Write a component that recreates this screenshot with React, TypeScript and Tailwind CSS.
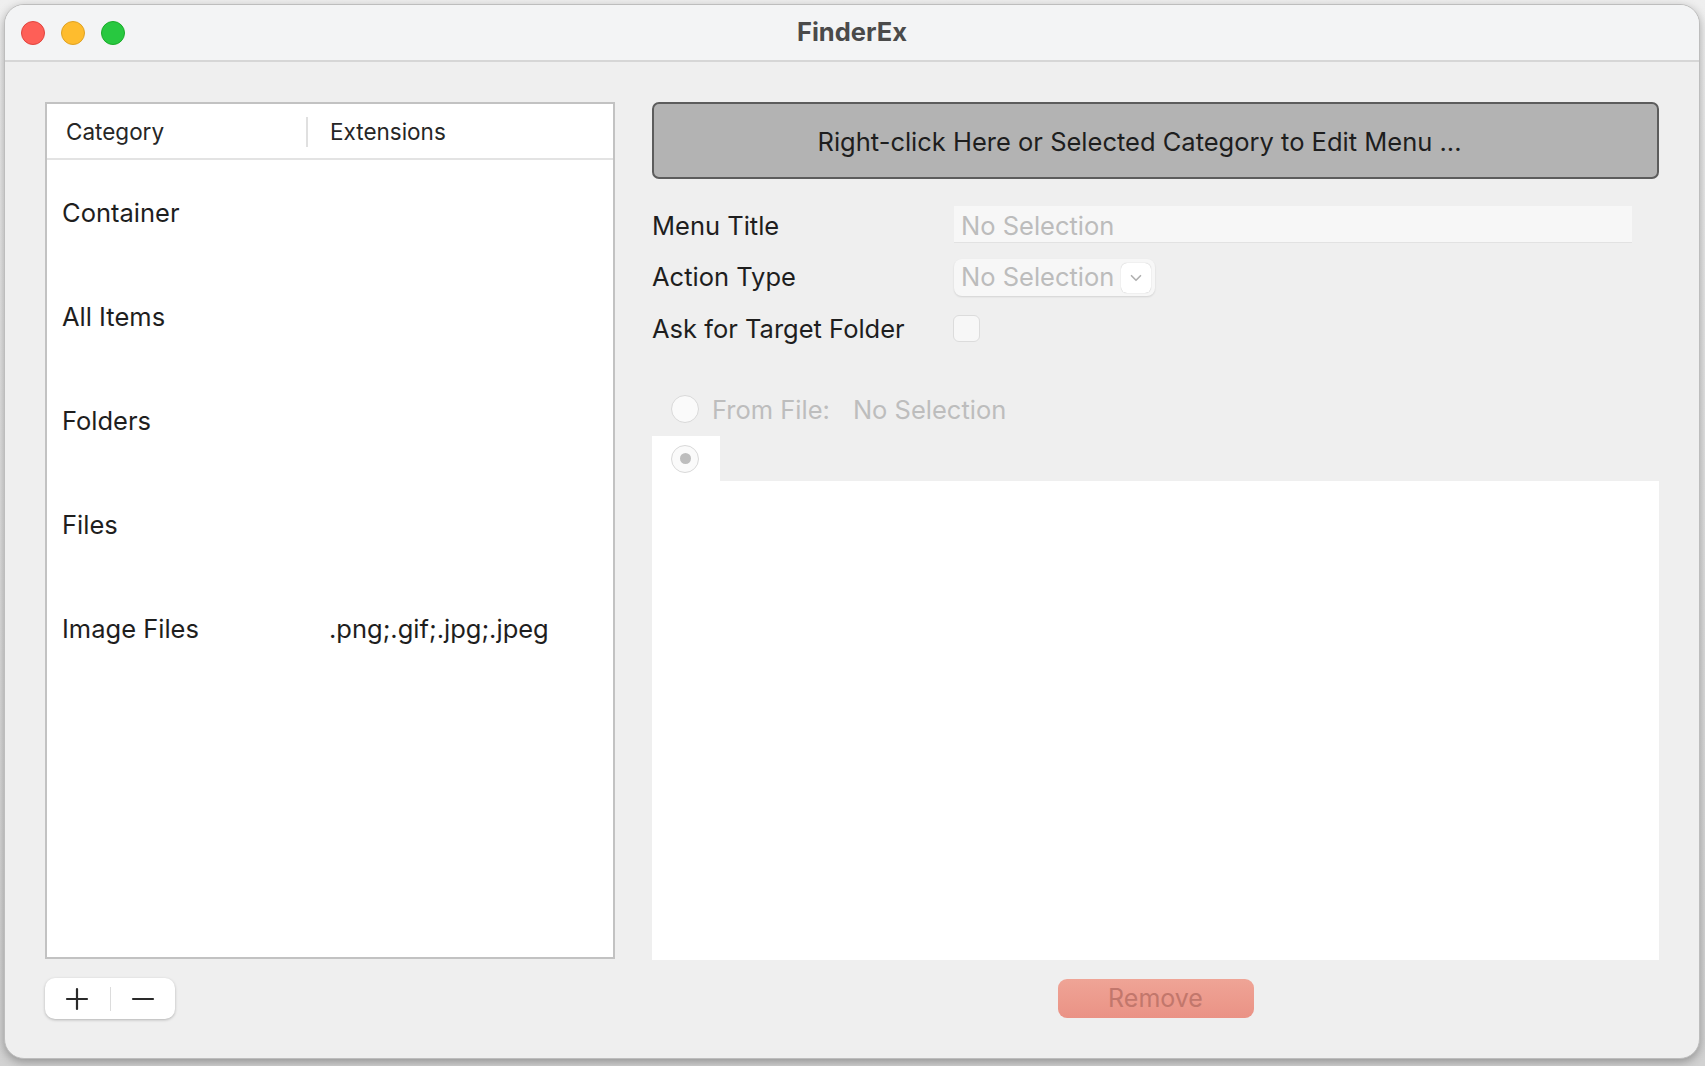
import { ChevronDown } from "lucide-react";

const categories = [
    { name: "Container", ext: "" },
    { name: "All Items", ext: "" },
    { name: "Folders", ext: "" },
    { name: "Files", ext: "" },
    { name: "Image Files", ext: ".png;.gif;.jpg;.jpeg" },
];

function TrafficLights() {
    return (
        <div className="flex items-center gap-[16px] pl-[16px]">
            <span className="size-[24px] rounded-full bg-[#fe5f57] border border-[#e0443e]" />
            <span className="size-[24px] rounded-full bg-[#febc2e] border border-[#dea123]" />
            <span className="size-[24px] rounded-full bg-[#28c840] border border-[#1aab29]" />
        </div>
    );
}

function CategoryTable() {
    return (
        <div className="flex flex-col w-[570px] h-[857px] bg-white border-2 border-[#c2c2c2]">
            <div className="flex items-center h-[56px] pt-[2px] border-b-2 border-[#e3e3e3] text-[22.5px] text-[#262626]">
                <div className="w-[259px] pl-[19px]">Category</div>
                <div className="w-[2px] h-[30px] bg-[#e0e0e0]" />
                <div className="pl-[22px]">Extensions</div>
            </div>
            {categories.map((c) => (
                <div key={c.name} className="flex items-center h-[104px] pt-[2px] text-[25.5px] text-[#1e1e1e]">
                    <div className="w-[266px] pl-[15px]">{c.name}</div>
                    <div className="pl-[16px]">{c.ext}</div>
                </div>
            ))}
        </div>
    );
}

function AddRemove() {
    return (
        <div className="mt-[19px] flex items-center w-[130px] h-[41px] bg-white rounded-[10px] shadow-[0_1px_3px_rgba(0,0,0,0.25)]">
            <div className="flex-1 flex justify-center">
                <svg width="24" height="24" viewBox="0 0 24 24" stroke="#2a2a2a" strokeWidth="2.2" strokeLinecap="round">
                    <path d="M12 2v20M2 12h20" />
                </svg>
            </div>
            <div className="w-[1px] h-[24px] bg-[#dcdcdc]" />
            <div className="flex-1 flex justify-center">
                <svg width="24" height="24" viewBox="0 0 24 24" stroke="#2a2a2a" strokeWidth="2.2" strokeLinecap="round">
                    <path d="M2 12h20" />
                </svg>
            </div>
        </div>
    );
}

function Radio({ checked }: { checked?: boolean }) {
    return (
        <span className="flex items-center justify-center size-[28px] rounded-full bg-[#fafafa] border border-[#d9d9d9]">
            {checked && <span className="size-[11px] rounded-full bg-[#bdbdbd]" />}
        </span>
    );
}

function EditorPanel() {
    return (
        <div className="flex flex-col w-[1007px]">
            <div className="flex items-center justify-center h-[77px] pt-[4px] pr-[32px] bg-[#b3b3b3] border-2 border-[#5c5c5c] rounded-[7px] text-[25.5px] text-[#1e1e1e]">
                Right-click Here or Selected Category to Edit Menu ...
            </div>

            <div className="flex items-center mt-[27px] h-[37px]">
                <div className="w-[302px] pt-[3px] text-[25.5px] text-[#1e1e1e]">Menu Title</div>
                <div className="flex items-center w-[678px] h-[37px] pt-[4px] bg-[#f7f7f7] border-b border-[#e2e2e2] pl-[7px] text-[25.5px] text-[#bcbcbc]">
                    No Selection
                </div>
            </div>

            <div className="flex items-center mt-[16px] h-[37px]">
                <div className="w-[302px] text-[25.5px] text-[#1e1e1e]">Action Type</div>
                <div className="flex items-center justify-between w-[201px] h-[37px] bg-[#f7f7f7] rounded-[8px] shadow-[0_1px_2px_rgba(0,0,0,0.12)] pl-[7px] pr-[4px] text-[25.5px] text-[#bcbcbc]">
                    No Selection
                    <span className="flex items-center justify-center w-[30px] h-[30px] bg-white rounded-[6px] shadow-[0_0_1px_rgba(0,0,0,0.3)]">
                        <ChevronDown size={18} color="#b0b0b0" strokeWidth={2.2} />
                    </span>
                </div>
            </div>

            <div className="flex items-center mt-[19px] h-[27px]">
                <div className="w-[301px] pt-[2px] text-[25.5px] text-[#1e1e1e]">Ask for Target Folder</div>
                <span className="size-[27px] bg-[#f7f7f7] border border-[#dcdcdc] rounded-[6px]" />
            </div>

            <div className="flex items-center mt-[53px] h-[28px] pl-[19px] text-[25.5px] text-[#bdbdbd]">
                <Radio />
                <span className="ml-[13px] pt-[2px]">From File:</span>
                <span className="ml-[23px] pt-[2px]">No Selection</span>
            </div>

            <div className="mt-[13px] flex">
                <div className="flex items-center w-[68px] h-[45px] bg-white pl-[19px]">
                    <Radio checked />
                </div>
            </div>
            <div className="h-[479px] bg-white" />

            <div className="flex justify-center mt-[19px]">
                <div className="flex items-center justify-center w-[196px] h-[39px] rounded-[9px] bg-gradient-to-b from-[#efa496] to-[#ea9285] text-[25px] text-[#c2776c]">
                    Remove
                </div>
            </div>
        </div>
    );
}

export default function App() {
    return (
        <div
            className="w-[1705px] h-[1066px] bg-gradient-to-b from-[#efefef] to-[#d2d2d2] p-[4px] pr-[5px] pb-[7px]"
            style={{ fontFamily: "Inter, 'Noto Sans', sans-serif" }}
        >
            <div className="flex flex-col w-[1696px] h-[1055px] rounded-[20px] border border-[#bdbdbd] bg-[#efefef] overflow-hidden shadow-[0_3px_10px_rgba(0,0,0,0.3)]">
                <div className="relative flex items-center h-[57px] bg-[#f3f4f5] border-b-2 border-[#d6d6d6]">
                    <TrafficLights />
                    <div className="absolute inset-0 flex items-center justify-center text-[25.5px] font-bold text-[#4a4a4a] pointer-events-none">
                        FinderEx
                    </div>
                </div>
                <div className="flex pl-[40px] pt-[40px] gap-[37px]">
                    <div className="flex flex-col">
                        <CategoryTable />
                        <AddRemove />
                    </div>
                    <EditorPanel />
                </div>
            </div>
        </div>
    );
}
